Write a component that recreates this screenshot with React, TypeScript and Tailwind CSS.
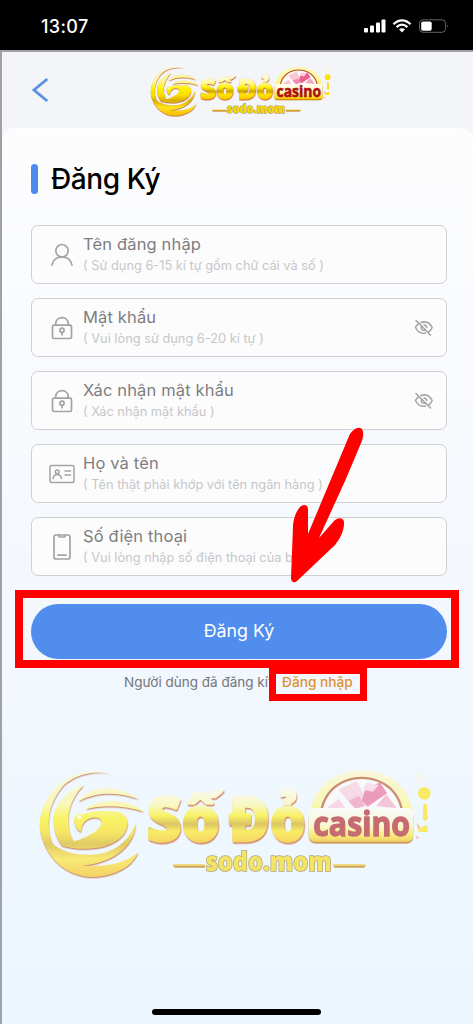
import React, { useId } from "react";

function Logo({ className }: { className: string }) {
  const uid = useId().replace(/[^a-zA-Z0-9]/g, "");
  const gold = `gold${uid}`;
  const text = `text${uid}`;
  const plate = `plate${uid}`;
  return (
    <svg viewBox="48 15 1200 390" className={className} aria-label="Số Đỏ casino">
      <defs>
        <linearGradient id={gold} gradientUnits="userSpaceOnUse" x1="0" y1="60" x2="0" y2="390">
          <stop offset="0" stopColor="#fff8c8" />
          <stop offset="0.32" stopColor="#fff78a" />
          <stop offset="0.45" stopColor="#fff200" />
          <stop offset="0.58" stopColor="#f9dc00" />
          <stop offset="0.68" stopColor="#d9ad00" />
          <stop offset="0.82" stopColor="#ffe21a" />
          <stop offset="1" stopColor="#f9b400" />
        </linearGradient>
        <linearGradient id={text} gradientUnits="userSpaceOnUse" x1="0" y1="120" x2="0" y2="282">
          <stop offset="0" stopColor="#fffbe0" />
          <stop offset="0.3" stopColor="#fff9a0" />
          <stop offset="0.5" stopColor="#ffef00" />
          <stop offset="0.65" stopColor="#cfa400" />
          <stop offset="0.78" stopColor="#ffe500" />
          <stop offset="1" stopColor="#fbbe00" />
        </linearGradient>
        <linearGradient id={plate} x1="0" y1="0" x2="0" y2="1">
          <stop offset="0" stopColor="#fffef5" />
          <stop offset="0.5" stopColor="#fff8c0" />
          <stop offset="0.8" stopColor="#ffe82a" />
          <stop offset="1" stopColor="#f5b800" />
        </linearGradient>
      </defs>
      <g fill={`url(#${gold})`} className="[filter:drop-shadow(1px_4px_0_#b5501c)]">
        <path d="M278 74C225 58 160 66 112 112C68 155 48 215 66 268C88 338 150 386 220 384C290 381 338 350 355 309C325 337 270 356 186 350C265 344 345 300 347 222C325 280 280 315 210 317C160 318 125 306 98 284C76 235 82 165 130 110C168 76 220 62 278 74Z" />
        <path d="M191 108C150 118 104 160 101 207C100 240 108 268 126 290C180 306 265 305 306 262C336 228 326 186 276 186C240 183 205 186 186 197C172 188 160 206 163 220C167 238 176 247 183 248C184 218 206 202 232 206C258 214 242 238 218 252C198 265 178 272 162 277C140 244 130 172 191 108Z" />
        <path d="M176 157C200 112 290 100 356 150C286 127 225 130 176 157Z" />
        <path d="M196 180C245 146 320 148 372 188C307 168 250 167 196 180Z" />
      </g>
      <circle cx="178" cy="204" r="6" fill="#fffde9" />
      <g
        fontFamily="Open Sans, Noto Sans, sans-serif"
        fontWeight="800"
        fontSize="184"
        fill={`url(#${text})`}
        stroke={`url(#${text})`}
        strokeWidth="7"
        strokeLinejoin="round"
        className="[filter:drop-shadow(2px_5px_0_#c04a14)]"
      >
        <text x="380" y="275" textLength="220" lengthAdjust="spacingAndGlyphs">Số</text>
        <text x="627" y="275" textLength="230" lengthAdjust="spacingAndGlyphs">Đỏ</text>
      </g>
      <path d="M872 190C890 22 1160 22 1178 190Z" fill={`url(#${gold})`} />
      <path d="M900 188C920 48 1130 48 1150 188Z" fill="#b24a18" />
      <path d="M907 188C928 57 1123 57 1143 188Z" fill="#fffafa" />
      <path d="M921 178L957 149L980 183Z" fill="#fbc3d2" />
      <path d="M955 122L1010 97L1040 151L1004 178Z" fill="#fbc7d5" />
      <path d="M1036 120L1080 100L1101 133L1043 173L1025 155Z" fill="#ec5f8d" />
      <path d="M1039 101L1076 108L1059 128L1029 122Z" fill="#fbd0dd" />
      <path d="M1069 171L1099 136L1130 178Z" fill="#f4a6bc" />
      <path d="M985 155L1017 141L1036 171L1006 179Z" fill="#f28cae" />
      <rect x="866" y="181" width="314" height="103" rx="20" fill="#bd6500" />
      <rect x="866" y="177" width="314" height="101" rx="18" fill={`url(#${plate})`} />
      <text x="880" y="260" fontFamily="Open Sans, sans-serif" fontWeight="700" fontSize="103" fill="#ac1114" stroke="#ac1114" strokeWidth="4" textLength="290" lengthAdjust="spacingAndGlyphs">casino</text>
      <g fill="#ffe000">
        <circle cx="1213" cy="133" r="19" />
        <circle cx="1200" cy="87" r="15" fill="#fff9ce" opacity="0.5" />
        <path d="M1210 164H1220L1223 210L1215 217L1208 210ZM1209 230H1223V249H1195V235H1209Z" />
        <path d="M1190 220L1201 234L1194 241ZM1188 260L1199 265L1190 270Z" fill="#ff9d74" />
      </g>
      <path d="M458 349H555V356H464ZM939 349H1038L1032 356H943Z" fill="#b47100" />
      <path d="M458 346H555V351H461ZM939 346H1038L1034 351H942Z" fill="#f1b900" />
      <text x="557" y="366" fontFamily="Open Sans, sans-serif" fontWeight="800" fontSize="77" fill="#f7d900" stroke="#8d7325" strokeWidth="5" paintOrder="stroke" textLength="378" lengthAdjust="spacingAndGlyphs">sodo.mom</text>
    </svg>
  );
}

const stroke = { fill: "none", stroke: "#a3a3a5", strokeWidth: 1.7, strokeLinecap: "round" as const, strokeLinejoin: "round" as const };

function UserIcon() {
  return (
    <svg viewBox="0 0 28 28" className="size-7" {...stroke}>
      <circle cx="14" cy="9.7" r="6.2" />
      <path d="M4 24.2C5 18.8 8.5 16 14 16S23 18.8 24 24.2" />
    </svg>
  );
}

function LockIcon() {
  return (
    <svg viewBox="0 0 28 28" className="size-7" {...stroke}>
      <rect x="4.5" y="11.2" width="19" height="13.3" rx="1.5" />
      <path d="M7.7 10.8V9.6C8 1.5 20 1.5 20.3 9.6V10.8" />
      <circle cx="14" cy="16.2" r="2.1" />
      <path d="M14 18.4V20.8" />
    </svg>
  );
}

function CardIcon() {
  return (
    <svg viewBox="0 0 28 28" className="size-7" {...stroke} strokeWidth={1.5}>
      <rect x="2" y="5.5" width="24" height="17" rx="1.5" />
      <circle cx="9.2" cy="11.8" r="1.9" />
      <path d="M5 18.5C6 13 12.5 13 13.5 18.5M17 11H22.5M17 15H22.5" />
    </svg>
  );
}

function PhoneIcon() {
  return (
    <svg viewBox="0 0 28 28" className="size-7" {...stroke}>
      <rect x="6" y="2" width="16" height="24" rx="2" />
      <path d="M10.5 2.2L11.5 4H16.5L17.5 2.2M10 22.2H18" />
    </svg>
  );
}

function EyeOff() {
  return (
    <svg viewBox="0 0 20 18" className="h-[18px] w-5" {...stroke} strokeWidth={1.5}>
      <path d="M2 1.5L16.5 16M7 3.5C12.2 1.7 16 4.2 18.2 8.5C17.2 10.8 16 12.2 14.5 13M4 5.2C2.8 6.2 2 7.3 1.5 8.5C3.8 13.2 7.4 15 11.5 14M7.5 7.2C6.4 10 8.3 11.8 10.8 11.2M10 6C11.5 6 12.5 7 12.8 8.5" />
    </svg>
  );
}

const fields = [
  { label: "Tên đăng nhập", hint: "( Sử dụng 6-15 kí tự gồm chữ cái và số )", icon: <UserIcon />, secret: false },
  { label: "Mật khẩu", hint: "( Vui lòng sử dụng 6-20 kí tự )", icon: <LockIcon />, secret: true },
  { label: "Xác nhận mật khẩu", hint: "( Xác nhận mật khẩu )", icon: <LockIcon />, secret: true },
  { label: "Họ và tên", hint: "( Tên thật phải khớp với tên ngân hàng )", icon: <CardIcon />, secret: false },
  { label: "Số điện thoại", hint: "( Vui lòng nhập số điện thoại của bạn )", icon: <PhoneIcon />, secret: false },
];

export default function App() {
  return (
    <div className="relative flex h-[1024px] w-[473px] flex-col overflow-hidden bg-[#f3f5f8] font-['Inter','Liberation_Sans',sans-serif]">
      <div className="flex h-[50px] shrink-0 items-center justify-between bg-black pr-[25px] pl-[41px] text-white">
        <span className="pt-0.5 text-[18px] font-medium tracking-[0.35px]">13:07</span>
        <svg viewBox="0 0 84 18" className="mt-0.5 h-[18px] w-[84px]" fill="#fff">
          <rect x="0" y="11" width="4" height="4.5" rx="1" />
          <rect x="6" y="8.5" width="4" height="7" rx="1" />
          <rect x="12" y="5.5" width="4" height="10" rx="1" />
          <rect x="17.5" y="2.5" width="4" height="13" rx="1" />
          <g fill="none" stroke="#fff" strokeWidth="2.3">
            <path d="M29.5 7.2C34.5 2 41.5 2 46.5 7.2M32.6 10.2C36 7 40 7 43.4 10.2" />
          </g>
          <path d="M35 12.3Q38 10 41 12.3L38 15.6Z" />
          <rect x="55.5" y="2.8" width="26" height="12.5" rx="3.5" fill="none" stroke="#636363" />
          <rect x="57.2" y="4.5" width="10.5" height="9.2" rx="1.8" />
          <path d="M83 7.2Q84.5 9 83 11Z" fill="#666" />
        </svg>
      </div>
      <div className="flex flex-1 flex-col border-t-2 border-l-2 border-[#a0a1a6]">
        <header className="flex h-[76px] shrink-0 items-start border-t border-l border-[#f9f9fb] pl-[28px]">
          <svg viewBox="0 0 20 26" className="mt-6 h-[26px] w-5" fill="none" stroke="#5a92df" strokeWidth="2.9">
            <path d="M16.3 2L3 13L16.3 24" />
          </svg>
          <Logo className="mt-[6px] ml-[98px] h-[60px] w-[184px]" />
        </header>
        <main className="flex flex-1 flex-col rounded-t-[12px] bg-linear-to-b from-[#fdfdfe] via-[#f4f8fd] via-50% to-[#ebf6ff] pr-[26px] pl-[29px]">
          <div className="mt-[36px] flex h-[30px] items-center gap-[13px]">
            <span className="h-[30px] w-[7px] rounded-full bg-[#4c8bee]" />
            <h1 className="text-[28px] leading-[30px] font-medium tracking-[-0.4px] whitespace-nowrap text-black">Đăng Ký</h1>
          </div>
          <div className="mt-[31px] flex flex-col gap-[14px]">
            {fields.map((f) => (
              <div key={f.label} className="flex h-[59px] items-center rounded-[7px] border border-[#cfd0d4] bg-[#fcfcfd] pr-3 pl-[16px]">
                {f.icon}
                <div className="ml-[7px] flex flex-1 flex-col whitespace-nowrap">
                  <span className="text-[16.5px] leading-[22px] tracking-[0.15px] text-[#7e7e81]">{f.label}</span>
                  <span className="text-[12.8px] leading-[21px] text-[#c7c7c9]">{f.hint}</span>
                </div>
                {f.secret && <EyeOff />}
              </div>
            ))}
          </div>
          <button className="mt-[28px] h-[55px] shrink-0 rounded-full bg-[#518ded] text-[17.8px] text-white">Đăng Ký</button>
          <p className="mt-[13px] ml-[93px] flex items-center gap-[6px] text-[13.5px] leading-5 whitespace-nowrap">
            <span className="w-[152px] text-[#75767a]">Người dùng đã đăng kí?</span>
            <a className="text-[13.7px] font-medium text-[#df9136]">Đăng nhập</a>
          </p>
          <div className="mt-[62px] ml-[5px]">
            <Logo className="h-[130px] w-[400px] opacity-60" />
          </div>
          <div className="mt-auto mb-[9px] ml-[121px] h-[6px] w-[169px] rounded-full bg-black" />
        </main>
      </div>
      <div className="absolute top-[590px] left-[15px] h-[78px] w-[444px] border-8 border-[#ff0000]" />
      <div className="absolute top-[667px] left-[269px] h-[34px] w-[98px] border-[7px] border-[#ff0000]" />
      <svg viewBox="0 0 233 310" className="absolute top-[290px] left-[240px] h-[310px] w-[233px]" fill="#ff0000">
        <path d="M109.5 145C112 140 118 136 121.5 138.5C124 141 123.5 147 121.5 152L105 191L79 248L94 231C98 227 103.5 227.5 104 232C104.5 239 101 248 95 255L57 291C54 293.5 51 292 51 288L53 236C53.5 228 57 218.5 62 215.5C65 214 68 215.5 68 219V244Z" />
      </svg>
    </div>
  );
}
